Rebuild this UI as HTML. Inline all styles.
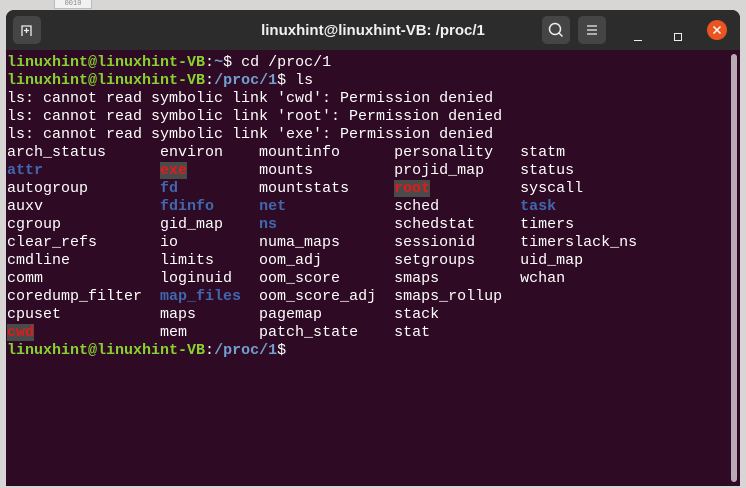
<!DOCTYPE html>
<html><head><style>
body{margin:0;width:746px;height:488px;background:#d8d6d4;overflow:hidden;position:relative;font-family:"Liberation Sans",sans-serif}
.tab{position:absolute;left:54px;top:0;width:36px;height:8px;background:#f2f2f2;border:1px solid #bbb;border-top:none;font-size:7px;color:#888;text-align:center;line-height:8px;font-family:"Liberation Mono",monospace}
.win{position:absolute;left:6px;top:10px;width:734px;height:476px;background:#2f0a24;border-radius:8px 8px 0 0;overflow:hidden}
.tb{height:40px;background:#2c2c2c;position:relative;color:#fff}
.title{position:absolute;left:0;right:0;top:12px;text-align:center;font-weight:bold;font-size:15px;color:#f0f0f0}
.btn{position:absolute;top:6px;width:28px;height:28px;background:#454545;border-radius:5px}
.term{position:absolute;left:1px;top:44px;font-family:"Liberation Mono",monospace;font-size:15px;line-height:18px;color:#ffffff;white-space:pre;letter-spacing:0}
.g{color:#87d22f;font-weight:bold}.b{color:#729fcf;font-weight:bold}.d{color:#3f68b0;font-weight:bold}
.r{color:#e21a1a;font-weight:bold;background:#4a4a4a}
.sb{position:absolute;left:725px;top:44px;width:6px;height:428px;background:#b8aab4;border-radius:3px}
</style></head><body>
<div class="tab">0010</div>
<div class="win">
<div class="tb">
<div class="btn" style="left:7px"><svg width="28" height="28"><path d="M9 20V10h9v10M13.5 12v5M11 14.5h5" stroke="#eee" fill="none" stroke-width="1.3"/></svg></div>
<div class="title">linuxhint@linuxhint-VB: /proc/1</div>
<div class="btn" style="left:536px"><svg width="28" height="28"><circle cx="13" cy="13" r="5.5" stroke="#eee" fill="none" stroke-width="1.5"/><path d="M17 17l3.5 3.5" stroke="#eee" stroke-width="1.5"/></svg></div>
<div class="btn" style="left:572px"><svg width="28" height="28"><path d="M9 10h10M9 14h10M9 18h10" stroke="#eee" stroke-width="1.3"/></svg></div>
<div style="position:absolute;left:628px;top:30px;width:8px;height:1px;background:#eee"></div>
<div style="position:absolute;left:668px;top:23px;width:6px;height:6px;border:1.3px solid #eee"></div>
<div style="position:absolute;left:701px;top:10px;width:20px;height:20px;border-radius:50%;background:#e95420"><svg width="20" height="20"><path d="M6.5 6.5l7 7M13.5 6.5l-7 7" stroke="#fff" stroke-width="1.5"/></svg></div>
</div>
<div class="term"><span class="g">linuxhint@linuxhint-VB</span>:<span class="b">~</span>$ cd /proc/1
<span class="g">linuxhint@linuxhint-VB</span>:<span class="b">/proc/1</span>$ ls
ls: cannot read symbolic link 'cwd': Permission denied
ls: cannot read symbolic link 'root': Permission denied
ls: cannot read symbolic link 'exe': Permission denied
arch_status      environ    mountinfo      personality   statm
<span class="d">attr</span>             <span class="r">exe</span>        mounts         projid_map    status
autogroup        <span class="d">fd</span>         mountstats     <span class="r">root</span>          syscall
auxv             <span class="d">fdinfo</span>     <span class="d">net</span>            sched         <span class="d">task</span>
cgroup           gid_map    <span class="d">ns</span>             schedstat     timers
clear_refs       io         numa_maps      sessionid     timerslack_ns
cmdline          limits     oom_adj        setgroups     uid_map
comm             loginuid   oom_score      smaps         wchan
coredump_filter  <span class="d">map_files</span>  oom_score_adj  smaps_rollup
cpuset           maps       pagemap        stack
<span class="r">cwd</span>              mem        patch_state    stat
<span class="g">linuxhint@linuxhint-VB</span>:<span class="b">/proc/1</span>$ </div>
<div class="sb"></div>
</div>
</body></html>
